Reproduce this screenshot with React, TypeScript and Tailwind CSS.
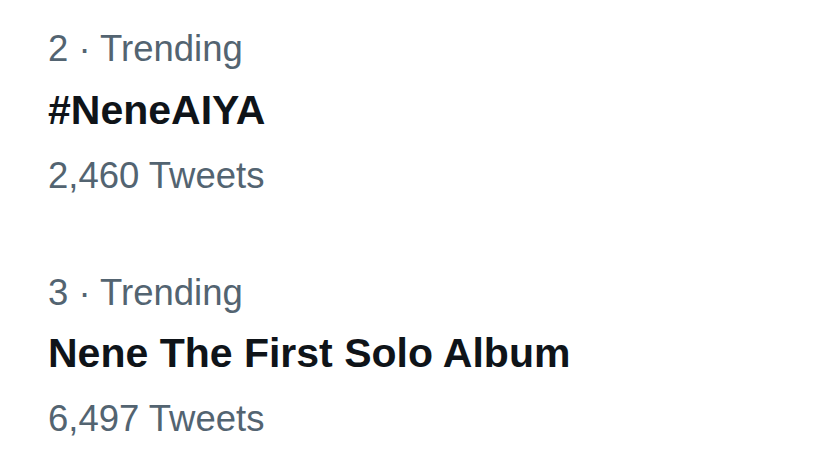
import React from 'react';

const Meta: React.FC<{ text: string; className?: string }> = ({ text, className = '' }) => (
  <div className={`text-[36.5px] leading-[40px] text-[#536471] ${className}`}>{text}</div>
);

const Title: React.FC<{ text: string; className?: string }> = ({ text, className = '' }) => (
  <div className={`text-[41px] leading-[46px] font-bold text-[#0f1419] ${className}`}>{text}</div>
);

const App: React.FC = () => {
  return (
    <div className="w-[832px] h-[468px] bg-white pl-[48px] pt-[29px] font-['Liberation_Sans',Arial,sans-serif]">
      {/* trend 2 */}
      <Meta text="2 · Trending" />
      <Title text="#NeneAIYA" className="mt-[18px]" />
      <Meta text="2,460 Tweets" className="mt-[23px]" />

      {/* trend 3 */}
      <Meta text="3 · Trending" className="mt-[77px]" />
      <Title text="Nene The First Solo Album" className="mt-[17px]" />
      <Meta text="6,497 Tweets" className="mt-[23px]" />
    </div>
  );
};

export default App;
